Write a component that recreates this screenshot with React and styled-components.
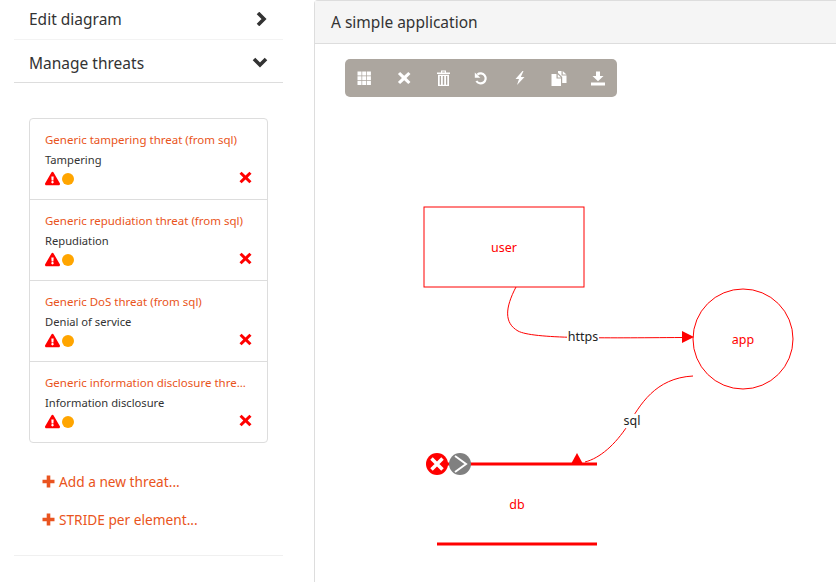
import React from "react";
import styled, { createGlobalStyle } from "styled-components";
import { FaExclamationTriangle } from "react-icons/fa";

const GlobalStyle = createGlobalStyle`
  html, body {
    margin: 0;
    padding: 0;
    height: 100%;
    overflow: hidden;
    background: #fff;
    font-family: "Noto Sans", "Open Sans", sans-serif;
    color: #333;
  }
`;

const Page = styled.div`
  display: grid;
  grid-template-columns: 314px 1fr;
  height: 582px;
  overflow: hidden;
`;

const Sidebar = styled.aside`
  padding-left: 14px;
  width: 269px;
`;

const PanelHeader = styled.div`
  display: flex;
  align-items: center;
  justify-content: space-between;
  box-sizing: border-box;
  height: ${(p) => p.$height}px;
  padding: ${(p) => p.$pad};
  font-size: 15.5px;
  border-bottom: 1px solid ${(p) => p.$line};
`;

const Body = styled.div`
  padding: 35px 15px 0;
  height: 473px;
  box-sizing: border-box;
  border-bottom: 1px solid #f0f0f0;
`;

const ThreatList = styled.div`
  width: 239px;
  box-sizing: border-box;
  border: 1px solid #ddd;
  border-radius: 4px;
`;

const Threat = styled.div`
  box-sizing: border-box;
  height: 81px;
  padding: 13px 15px 0;
  border-top: 1px solid ${(p) => (p.$first ? "transparent" : "#ddd")};
  margin-top: ${(p) => (p.$first ? "-1px" : "0")};
`;

const ThreatTitle = styled.div`
  color: #e95420;
  font-size: 11.5px;
  line-height: 16px;
  white-space: nowrap;
  overflow: hidden;
  text-overflow: ellipsis;
`;

const ThreatType = styled.div`
  font-size: 11.2px;
  line-height: 16px;
  margin-top: 4px;
`;

const ThreatFoot = styled.div`
  display: flex;
  align-items: center;
  justify-content: space-between;
  height: 18px;
  margin-top: 2px;
  color: #f00;
`;

const Severity = styled.span`
  display: flex;
  align-items: center;
  gap: 2px;
`;

const WarningIcon = styled(FaExclamationTriangle)`
  margin-top: -1px;
`;

const Dot = styled.span`
  width: 12px;
  height: 12px;
  border-radius: 50%;
  background: #ffa500;
`;

const RemoveIcon = styled.svg`
  display: block;
  width: 13px;
  height: 13px;
  margin: -3px 0 0;
  fill: #f00;
`;

const ActionLink = styled.div`
  display: flex;
  align-items: center;
  gap: 4px;
  color: #e95420;
  font-size: 13.7px;
  height: 20px;
  margin: 0 0 18px 13px;
`;

const PlusIcon = styled.svg`
  display: block;
  width: 13px;
  height: 13px;
  fill: #e95420;
`;

const Actions = styled.div`
  padding-top: 28px;
`;

const Main = styled.main`
  border-left: 1px solid #ddd;
  border-top: 1px solid #ddd;
  border-top-left-radius: 4px;
  display: flex;
  flex-direction: column;
`;

const MainHeader = styled.div`
  box-sizing: border-box;
  height: 43px;
  padding: 0 16px;
  display: flex;
  align-items: center;
  background: #f5f5f5;
  border-bottom: 1px solid #ddd;
  font-size: 15.5px;
`;

const Canvas = styled.div`
  position: relative;
  flex: 1;
`;

const Toolbar = styled.div`
  position: absolute;
  left: 30px;
  top: 15px;
  display: flex;
  width: 272px;
  height: 38px;
  border-radius: 5px;
  background: #aca69f;
`;

const ToolButton = styled.span`
  flex: 1;
  display: flex;
  align-items: center;
  justify-content: center;
`;

const ToolIcon = styled.svg`
  display: block;
  width: 16px;
  height: 16px;
  fill: #fff;
`;

const Chevron = styled.svg`
  display: block;
  width: 16px;
  height: 14px;
  fill: none;
  stroke: #333;
  stroke-width: 3.6;
`;

const Diagram = styled.svg`
  display: block;
  width: 521px;
  height: 538px;
`;

const NodeLabel = styled.text`
  font-family: "Noto Sans", "Open Sans", sans-serif;
  font-size: 12.5px;
  text-anchor: middle;
  fill: ${(p) => p.$color};
`;

const threats = [
  ["Generic tampering threat (from sql)", "Tampering"],
  ["Generic repudiation threat (from sql)", "Repudiation"],
  ["Generic DoS threat (from sql)", "Denial of service"],
  ["Generic information disclosure threat (from sql)", "Information disclosure"],
];

const CROSS = "M3.2 0.8 L8 5.4 L12.8 0.8 L15.4 3.4 L10.7 8 L15.4 12.6 L12.8 15.2 L8 10.6 L3.2 15.2 L0.6 12.6 L5.3 8 L0.6 3.4 Z";

const tools = [
  // grid
  <path key="g" d="M1.5 1.5h4v4h-4zM6.2 1.5h4v4h-4zM10.9 1.5h4v4h-4zM1.5 6.2h4v4h-4zM6.2 6.2h4v4h-4zM10.9 6.2h4v4h-4zM1.5 10.9h4v4h-4zM6.2 10.9h4v4h-4zM10.9 10.9h4v4h-4z" />,
  // remove
  <path key="x" d={CROSS} transform="translate(2.4 1.2) scale(0.85)" />,
  // trash
  <g key="t" transform="translate(1.5 0)">
    <path d="M1.5 2.6h13v1.4h-13zM5.5 0.4h5v2.2h-1.2v-1h-2.6v1H5.5z" />
    <path d="M2.5 4.8h11V16h-11zM4.2 6v8.8h1.3V6zM7.3 6v8.8h1.4V6zM10.5 6v8.8h1.3V6z" fillRule="evenodd" />
  </g>,
  // undo
  <g key="u">
    <path d="M4.4 4.6 A5 5 0 1 1 3.4 11" fill="none" stroke="#fff" strokeWidth="2.2" />
    <path d="M1.8 2.4 L7.4 7.8 L1.8 7.8 Z" />
  </g>,
  // flash
  <path key="f" d="M10.5 1 L3.5 9 H7 L5 15 L12.5 7 H8.8 L11.5 1 Z" />,
  // copy
  <path key="c" d="M0.5 4h5v4.5h4.5V16H0.5zM6.7 4.2 L10 7.4 H6.7zM7 1h3.5v4.5h5V13h-4.3V7 L7 3zM11.7 1 L15.500 4.6H11.7z" />,
  // download
  <path key="d" d="M6 1.5h4V6h3.5L8 11.3 2.5 6H6zM1 12.5h14V15.5H1z" />,
];

const Threats = () =>
  threats.map(([title, type], i) => (
    <Threat key={title} $first={i === 0}>
      <ThreatTitle>{title}</ThreatTitle>
      <ThreatType>{type}</ThreatType>
      <ThreatFoot>
        <Severity>
          <WarningIcon size={15} />
          <Dot />
        </Severity>
        <RemoveIcon viewBox="0 0 16 16">
          <path d={CROSS} />
        </RemoveIcon>
      </ThreatFoot>
    </Threat>
  ));

const Plus = () => (
  <PlusIcon viewBox="0 0 13 13">
    <path d="M4.7 0.5h3.6v4.2h4.2v3.6H8.3v4.2H4.7V8.3H0.5V4.7h4.2z" />
  </PlusIcon>
);

export default function App() {
  return (
    <Page>
      <GlobalStyle />
      <Sidebar>
        <PanelHeader $height={40} $pad="0 15px 2px" $line="#f3f3f3">
          Edit diagram
          <Chevron viewBox="0 0 16 14">
            <path d="M6 1 L12 7 L6 13" />
          </Chevron>
        </PanelHeader>
        <PanelHeader $height={43} $pad="3px 15px 0" $line="#ddd">
          Manage threats
          <Chevron viewBox="0 0 16 14">
            <path d="M2 3 L8 9 L14 3" />
          </Chevron>
        </PanelHeader>
        <Body>
          <ThreatList>
            <Threats />
          </ThreatList>
          <Actions>
            <ActionLink>
              <Plus />
              Add a new threat...
            </ActionLink>
            <ActionLink>
              <Plus />
              STRIDE per element...
            </ActionLink>
          </Actions>
        </Body>
      </Sidebar>
      <Main>
        <MainHeader>A simple application</MainHeader>
        <Canvas>
          <Toolbar>
            {tools.map((icon) => (
              <ToolButton key={icon.key}>
                <ToolIcon viewBox="0 0 16 16">{icon}</ToolIcon>
              </ToolButton>
            ))}
          </Toolbar>
          <Diagram viewBox="315 44 521 538">
            <rect x="424" y="207" width="160" height="80" fill="none" stroke="#f00" />
            <circle cx="743" cy="339" r="50" fill="none" stroke="#f00" />
            <path
              d="M516 287 C505 308 504 323 518 331 C533 339 600 338 682 337.5"
              fill="none"
              stroke="#f00"
            />
            <path d="M694 337 L682 331 L682 343 Z" fill="#f00" />
            <path
              d="M693 376 C655 378 640 405 628 425 C615 445 600 458 585 462"
              fill="none"
              stroke="#f00"
            />
            <path d="M577 453 L571 464 L583 464 Z" fill="#f00" />
            <rect x="567" y="328" width="32" height="18" fill="#fff" />
            <rect x="624" y="414" width="18" height="14" fill="#fff" />
            <NodeLabel x="583" y="341" $color="#222">https</NodeLabel>
            <NodeLabel x="632" y="425" $color="#222">sql</NodeLabel>
            <NodeLabel x="504" y="252" $color="#f00">user</NodeLabel>
            <NodeLabel x="743" y="344" $color="#f00">app</NodeLabel>
            <NodeLabel x="517" y="509" $color="#f00">db</NodeLabel>
            <path d="M437 464 H597 M437 544 H597" stroke="#f00" strokeWidth="3" />
            <circle cx="460" cy="464" r="11" fill="#808080" />
            <path d="M455 456 L466 464 L455 472" fill="none" stroke="#fff" strokeWidth="2" />
            <circle cx="437" cy="464" r="11" fill="#f00" />
            <path d="M431.5 458.5 L442.5 469.5 M442.5 458.5 L431.5 469.5" stroke="#fff" strokeWidth="3.5" />
          </Diagram>
        </Canvas>
      </Main>
    </Page>
  );
}
